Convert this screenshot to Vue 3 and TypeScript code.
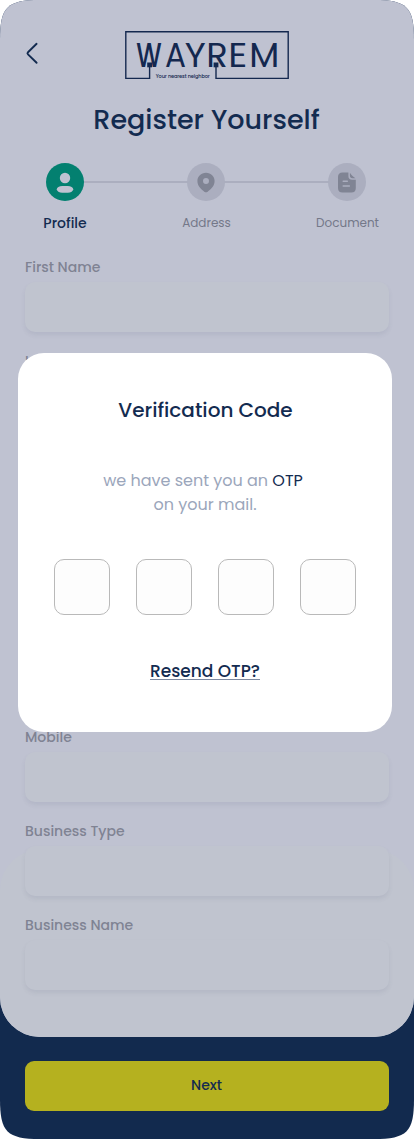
<script setup lang="ts">
import { ref } from 'vue'

type Step = { id: string; label: string; active: boolean }
type Field = { id: string; label: string }
type Letter = { ch: string; x: number; w: number }

const letters: Letter[] = [
  { ch: 'W', x: 11.3, w: 25.4 },
  { ch: 'A', x: 40, w: 21 },
  { ch: 'Y', x: 59.8, w: 21 },
  { ch: 'R', x: 81.3, w: 21.5 },
  { ch: 'E', x: 103.3, w: 19 },
  { ch: 'M', x: 124.2, w: 30 },
]

const steps: Step[] = [
  { id: 'profile', label: 'Profile', active: true },
  { id: 'address', label: 'Address', active: false },
  { id: 'document', label: 'Document', active: false },
]

const fields: Field[] = [
  { id: 'first', label: 'First Name' },
  { id: 'last', label: 'Last Name' },
  { id: 'f3', label: '' },
  { id: 'f4', label: '' },
  { id: 'f5', label: '' },
  { id: 'mobile', label: 'Mobile' },
  { id: 'type', label: 'Business Type' },
  { id: 'name', label: 'Business Name' },
]

const values = ref<string[]>(fields.map(() => ''))
const otp = ref<string[]>(['', '', '', ''])
</script>

<template>
  <div class="phone">
    <main class="sheet">
      <header class="header">
        <button class="back" aria-label="Back">
          <svg width="14" height="24" viewBox="0 0 14 24">
            <path d="M11.6 2.8 L3 11.2 Q1.9 12.3 3 13.4 L11.6 21.8" />
          </svg>
        </button>
        <svg class="logo" width="164" height="49" viewBox="0 0 164 49" aria-label="Wayrem">
          <path class="frame" d="M24.6 36 V47.4 H.8 V.8 H163.2 V47.4 H91 V36" />
          <rect x="22.2" y="31.5" width="4.8" height="4.8" />
          <rect x="88.6" y="31.5" width="4.8" height="4.8" />
          <text
            v-for="l in letters"
            :key="l.ch"
            :class="['word', { bold: l.ch === 'W' }]"
            :x="l.x"
            y="36"
            :textLength="l.w"
            lengthAdjust="spacingAndGlyphs"
          >{{ l.ch }}</text>
          <text class="tag" x="30.7" y="47.2" textLength="54">Your nearest neighbor</text>
        </svg>
      </header>

      <h1>Register Yourself</h1>

      <ol class="steps">
        <li v-for="s in steps" :key="s.id" :class="{ active: s.active }">
          <span class="dot">
            <svg v-if="s.id === 'profile'" width="20" height="22" viewBox="0 0 20 22">
              <circle cx="10" cy="7" r="5.2" />
              <rect x="1.8" y="14.9" width="16.4" height="6.8" rx="5.4" ry="3.4" />
            </svg>
            <svg v-else-if="s.id === 'address'" width="20" height="22" viewBox="0 0 20 22">
              <path
                fill-rule="evenodd"
                d="M10 1.8 C5 1.8 1.4 5.5 1.4 10.1 C1.4 15 5 18.5 8.6 20.9 Q10 21.7 11.4 20.9 C15 18.5 18.6 15 18.6 10.1 C18.6 5.5 15 1.8 10 1.8 Z M10 7 A3 3 0 1 1 10 13 A3 3 0 1 1 10 7 Z"
              />
            </svg>
            <svg v-else width="20" height="22" viewBox="0 0 20 22">
              <path
                d="M5.5 1.6 H11.4 V5 Q11.4 8.8 15.2 8.8 H18.8 V17.1 Q18.8 21.6 14.3 21.6 H5.5 Q1 21.6 1 17.1 V6.1 Q1 1.6 5.5 1.6 Z"
              />
              <path d="M12.9 1.7 Q14 3.7 15.6 5 Q17 6.3 18.5 7.2 H15.5 Q12.9 7.2 12.9 4.8 Z" />
              <path class="line" d="M6.2 10.3 H10.3 M6.2 15 H12.4" />
            </svg>
          </span>
          <span class="step-label">{{ s.label }}</span>
        </li>
      </ol>

      <form class="fields" @submit.prevent>
        <label v-for="(f, i) in fields" :key="f.id" class="field">
          <span class="caption">{{ f.label }}</span>
          <input v-model="values[i]" type="text" />
        </label>
      </form>
    </main>

    <footer class="footer">
      <button class="next">Next</button>
    </footer>

    <section class="modal" role="dialog" aria-modal="true">
      <h2>Verification Code</h2>
      <p class="sent">
        we have sent you an <b>OTP</b><br />
        <span class="second">on your mail.</span>
      </p>
      <div class="otp">
        <input v-for="(_, i) in otp" :key="i" v-model="otp[i]" maxlength="1" />
      </div>
      <a class="resend">Resend OTP?</a>
    </section>
  </div>
</template>

<style>
body {
  margin: 0;
  background: #fff;
}
</style>

<style scoped>
* {
  box-sizing: border-box;
}
.phone {
  position: relative;
  width: 414px;
  height: 1139px;
  background: #122a4e;
  font-family: Poppins, Inter, 'Open Sans', sans-serif;
  color: #132b50;
  clip-path: path(
    'M0 40 C0 7 7 0 40 0 H374 C407 0 414 7 414 40 V1099 C414 1132 407 1139 374 1139 H40 C7 1139 0 1132 0 1099 Z'
  );
}
button,
input {
  font: inherit;
  color: inherit;
  border: 0;
  padding: 0;
  background: none;
  outline: 0;
}
.sheet {
  position: relative;
  z-index: 0;
  height: 1037px;
  padding: 31px 25px 0;
  border-radius: 0 0 40px 40px;
  background: #bfc2d1;
}
/* faint lighter panel behind the last fields */
.sheet::before {
  content: '';
  position: absolute;
  z-index: -1;
  left: 0;
  right: 0;
  bottom: 0;
  height: 187px;
  border-radius: 40px;
  background: #c0c4cf;
}
.header {
  display: grid;
  grid-template-columns: 100px 164px 100px;
  height: 49px;
}
.back {
  justify-self: start;
  height: 24px;
  margin-top: 10px;
}
.back svg {
  display: block;
}
.back path {
  fill: none;
  stroke: #132b50;
  stroke-width: 1.9;
  stroke-linecap: round;
  stroke-linejoin: round;
}
.logo {
  fill: #14284f;
}
.frame {
  fill: none;
  stroke: #14284f;
  stroke-width: 1.4;
}
.word {
  font: 400 33px Poppins, Lato, sans-serif;
}
.bold {
  font-weight: 500;
}
.tag {
  font: 500 5px Poppins, Inter, sans-serif;
}
h1 {
  margin: 20px 0 0;
  padding-right: 1px;
  font-size: 27px;
  font-weight: 500;
  line-height: 40px;
  text-align: center;
  white-space: nowrap;
}
.steps {
  display: flex;
  justify-content: space-between;
  list-style: none;
  margin: 23px 42px 0 40px;
  padding: 0;
  height: 69px;
  background: linear-gradient(#abaebf, #abaebf) 0 18px / 282px 2px no-repeat;
}
.steps li {
  display: flex;
  flex-direction: column;
  align-items: center;
  width: 0;
  color: #747889;
}
.dot {
  display: grid;
  place-items: center;
  flex: none;
  width: 38.4px;
  height: 38.4px;
  border-radius: 50%;
  background: #abaebf;
}
.dot svg {
  fill: #808494;
}
.active .dot {
  background: #038070;
}
.active .dot svg {
  fill: #bfc2d1;
}
.line {
  fill: none;
  stroke: #abaebf;
  stroke-width: 1.5;
  stroke-linecap: round;
}
.step-label {
  margin-top: 11.6px;
  padding-left: 1px;
  font-size: 12px;
  line-height: 20px;
  white-space: nowrap;
}
.steps .active {
  color: #132b50;
}
.active .step-label {
  padding-left: 0;
  font-size: 14px;
  font-weight: 500;
}
.fields {
  display: grid;
  grid-auto-rows: 94px;
  margin-top: 25px;
}
.field {
  display: block;
}
.caption {
  display: block;
  height: 25px;
  font-size: 14px;
  font-weight: 500;
  line-height: 21px;
  color: #7f8393;
}
.field input {
  display: block;
  width: 364px;
  height: 50px;
  border-radius: 10px;
  background: #c0c4cf;
  box-shadow: 0 3px 4px rgba(80, 85, 120, 0.1);
}
.footer {
  padding: 24px 25px;
}
.next {
  display: block;
  width: 364px;
  height: 50px;
  padding: 0 1px 2px 0;
  border-radius: 9px;
  background: #b5b11f;
  font-size: 14px;
  font-weight: 500;
  line-height: 20px;
}
.modal {
  position: absolute;
  z-index: 1;
  left: 18px;
  top: 353px;
  width: 374px;
  height: 379px;
  padding-top: 42px;
  border-radius: 26px;
  background: #fff;
  text-align: center;
}
h2 {
  margin: 0;
  padding-left: 1px;
  font-size: 20px;
  font-weight: 500;
  line-height: 30px;
}
.sent {
  margin: 44px 0 0;
  padding-right: 4px;
  font-size: 16px;
  font-weight: 400;
  line-height: 24px;
  color: #9ba6bb;
}
.sent b {
  font-weight: 400;
  color: #132b50;
}
.second {
  padding-left: 4px;
}
.otp {
  display: flex;
  justify-content: space-between;
  margin: 42px 36px 0;
}
.otp input {
  width: 56px;
  height: 56px;
  border: 1px solid #b9b9b9;
  border-radius: 10px;
  background: #fdfdfd;
  text-align: center;
}
.resend {
  display: inline-block;
  height: 19px;
  margin-top: 46px;
  border-bottom: 1px solid #7d89a0;
  font-size: 17px;
  font-weight: 500;
  line-height: 20px;
}
</style>
